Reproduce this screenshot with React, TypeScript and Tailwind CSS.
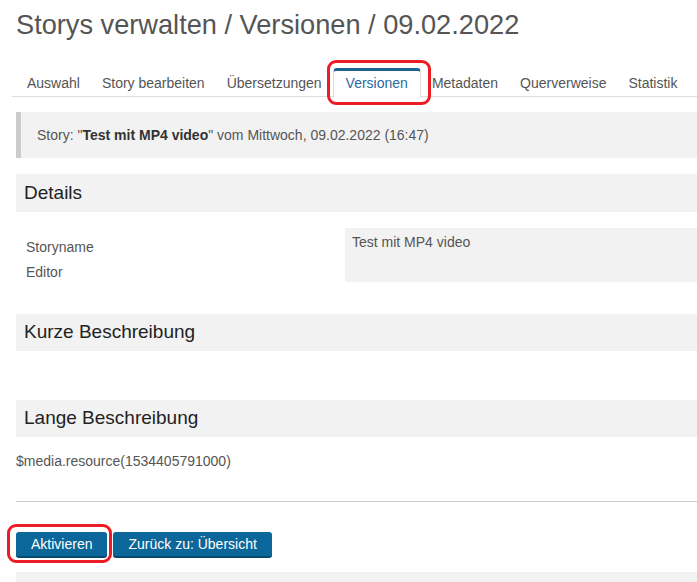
import React from "react";

const tabs = ["Auswahl", "Story bearbeiten", "Übersetzungen", "Versionen", "Metadaten", "Querverweise", "Statistik"];

export default function App() {
  return (
    <div className="relative w-[697px] h-[582px] overflow-hidden bg-white pl-4 text-[14px] text-[#555]" style={{ fontFamily: '"Liberation Sans", Arial, sans-serif' }}>
      <h1 className="mt-[10px] text-[27.2px] leading-[30px] text-[#555] font-normal whitespace-nowrap">Storys verwalten / Versionen / 09.02.2022</h1>

      <div className="mt-[28px] -ml-1 pl-1 flex border-b border-[#ddd] h-[29px]">
        {tabs.map((t) =>
          t === "Versionen" ? (
            <div key={t} className="relative h-[30px] px-[12px] pt-[2px] leading-[20px] text-[#2a6aa0] bg-white border-x border-[#ddd] rounded-t-[4px] border-t-[3px] border-t-[#1f6293] whitespace-nowrap">
              {t}
            </div>
          ) : (
            <div key={t} className="h-[29px] px-[11px] pt-[5px] leading-[20px] text-[#555] whitespace-nowrap">
              {t}
            </div>
          )
        )}
      </div>

      <div className="mt-[15px] h-[46px] bg-[#f2f2f2] border-l-[5px] border-[#cccccc] pl-[16px] flex items-center leading-[20px] whitespace-nowrap">
        <span>Story: "</span>
        <span className="font-bold text-[#333]">Test mit MP4 video</span>
        <span>" vom Mittwoch, 09.02.2022 (16:47)</span>
      </div>

      <div className="mt-[16px] h-[38px] bg-[#f2f2f2] pl-2 flex items-center text-[19px] text-[#222]">Details</div>

      <div className="mt-[16px] flex h-[54px]">
        <div className="w-[329px] pl-[10px] pt-[9px] leading-[20px]">
          <div className="h-[25px]">Storyname</div>
          <div className="h-[25px]">Editor</div>
        </div>
        <div className="flex-1 h-[54px] bg-[#f2f2f2] px-[7px] pt-[4px] leading-[20px]">Test mit MP4 video</div>
      </div>

      <div className="mt-[32px] h-[37px] bg-[#f2f2f2] pl-2 flex items-center text-[19px] text-[#222]">Kurze Beschreibung</div>

      <div className="mt-[49px] h-[37px] bg-[#f2f2f2] pl-2 flex items-center text-[19px] text-[#222]">Lange Beschreibung</div>

      <div className="mt-[14px] leading-[20px]">$media.resource(1534405791000)</div>

      <div className="mt-[30px] border-t border-[#cccccc]"></div>

      <div className="mt-[30px] flex gap-[6px]">
        <button className="h-[26px] px-[15px] bg-[#0b6699] text-white text-[14px] leading-[20px] rounded-[3px] border-b-2 border-[#064a72]">Aktivieren</button>
        <button className="h-[26px] px-[15px] bg-[#0b6699] text-white text-[14px] leading-[20px] rounded-[3px] border-b-2 border-[#064a72]">Zurück zu: Übersicht</button>
      </div>

      <div className="mt-[14px] h-[20px] bg-[#f2f2f2]"></div>

      <div className="absolute left-[327px] top-[60px] w-[104px] h-[45px] border-[3.5px] border-[#ec1c24] rounded-[9px] pointer-events-none"></div>
      <div className="absolute left-[7px] top-[524px] w-[105px] h-[39px] border-[3.5px] border-[#ec1c24] rounded-[9px] pointer-events-none"></div>
    </div>
  );
}
